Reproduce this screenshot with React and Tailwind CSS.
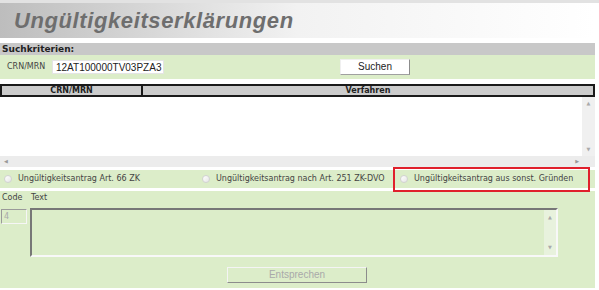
import React from 'react';

const Radio = () => (
  <span className="inline-block w-[8px] h-[8px] rounded-full border border-[#d2d2d2] bg-gradient-to-br from-white to-[#e6e6e6]" />
);

export default function App() {
  return (
    <div className="w-[599px] h-[290px] bg-white overflow-hidden font-['DejaVu_Sans',sans-serif] text-[8px] text-[#333]">
      {/* top line */}
      <div className="h-[3px] bg-[#e2e2e2]" />

      {/* title band */}
      <div className="h-[35px] w-[595px] bg-linear-to-r from-[#bdbdbd] via-[#f2f2f2] via-50% to-white flex items-center">
        <h1 className="pl-[14px] font-['Liberation_Sans',sans-serif] font-bold italic text-[22px] leading-none text-[#6e6e6e] tracking-[0.6px]">
          Ungültigkeitserklärungen
        </h1>
      </div>

      {/* search criteria */}
      <div className="mt-[5px] w-[595px]">
        <div className="h-[12px] bg-[#c8c8c8] pl-[2px] font-bold text-[9px] leading-[12px] text-[#222]">
          Suchkriterien:
        </div>
        <div className="h-[24px] bg-[#dcedc9] flex items-center">
          <span className="pl-[7px] w-[52px] text-[#444]">CRN/MRN</span>
          <div className="w-[112px] h-[14px] bg-white border border-[#e4e4e4] flex items-center pl-[3px] font-['Liberation_Sans',sans-serif] text-[10px] text-[#222]">
            12AT100000TV03PZA3
          </div>
          <button className="ml-[176px] w-[70px] h-[16px] bg-white border border-[#f0f0f0] border-r-[#8c8c8c] border-b-[#a0a0a0] font-['Liberation_Sans',sans-serif] text-[10px] text-[#222] leading-none">
            Suchen
          </button>
        </div>
      </div>

      {/* result table */}
      <div className="mt-[5px] w-[595px]">
        <div className="h-[13px] border-2 border-[#1a1a1a] bg-[#cccccc] flex font-bold text-[8px] leading-[9px] text-[#222]">
          <div className="w-[141px] border-r-2 border-[#1a1a1a] text-center">CRN/MRN</div>
          <div className="flex-1 text-center">Verfahren</div>
        </div>
        <div className="h-[59px] flex">
          <div className="flex-1 bg-white" />
          <div className="w-[13px] bg-[#f0f0f0] flex flex-col items-center justify-between py-[3px] text-[5px] text-[#aaa]">
            <span>▲</span>
            <span>▼</span>
          </div>
        </div>
        <div className="h-[11px] bg-[#ececec] flex items-center justify-between pl-[4px] pr-[16px] text-[5px] text-[#999]">
          <span>◀</span>
          <span>▶</span>
        </div>
      </div>

      {/* radio row */}
      <div className="relative mt-[3px] w-[595px] h-[18px] bg-[#dcedc9] flex items-center text-[#444]">
        <div className="flex items-center pl-[4px] w-[202px] gap-[6px]">
          <Radio />
          <span>Ungültigkeitsantrag Art. 66 ZK</span>
        </div>
        <div className="flex items-center w-[198px] gap-[6px]">
          <Radio />
          <span>Ungültigkeitsantrag nach Art. 251 ZK-DVO</span>
        </div>
        <div className="flex items-center gap-[6px]">
          <Radio />
          <span>Ungültigkeitsantrag aus sonst. Gründen</span>
        </div>
        <div className="absolute left-[393px] top-[-3px] w-[197px] h-[25px] border-2 border-[#e0202c]" />
      </div>

      {/* detail panel */}
      <div className="mt-[3px] w-[595px] h-[97px] bg-[#dcedc9] flex flex-col text-[#444]">
        <div className="h-[13px] flex items-end">
          <span className="pl-[2px] w-[31px]">Code</span>
          <span>Text</span>
        </div>
        <div className="flex mt-[4px]">
          <div className="ml-[1px] mt-[1px] w-[26px] h-[15px] border border-[#f6f6f6] border-t-[#9a9a9a] border-l-[#9a9a9a] pl-[2px] text-[#aaa] leading-[13px]">
            4
          </div>
          <div className="ml-[3px] w-[528px] h-[49px] border-2 border-[#f8f8f8] border-t-[#777] border-l-[#777] flex justify-end">
            <div className="w-[12px] bg-[#e8f2dd] flex flex-col items-center justify-between py-[4px] text-[5px] text-[#aaa]">
              <span>▲</span>
              <span>▼</span>
            </div>
          </div>
        </div>
        <button className="mt-[10px] ml-[227px] w-[140px] h-[16px] border border-[#f4f4f4] border-r-[#8c8c8c] border-b-[#8c8c8c] font-['Liberation_Sans',sans-serif] text-[10px] text-[#a9a9a9] leading-none">
          Entsprechen
        </button>
      </div>
    </div>
  );
}
